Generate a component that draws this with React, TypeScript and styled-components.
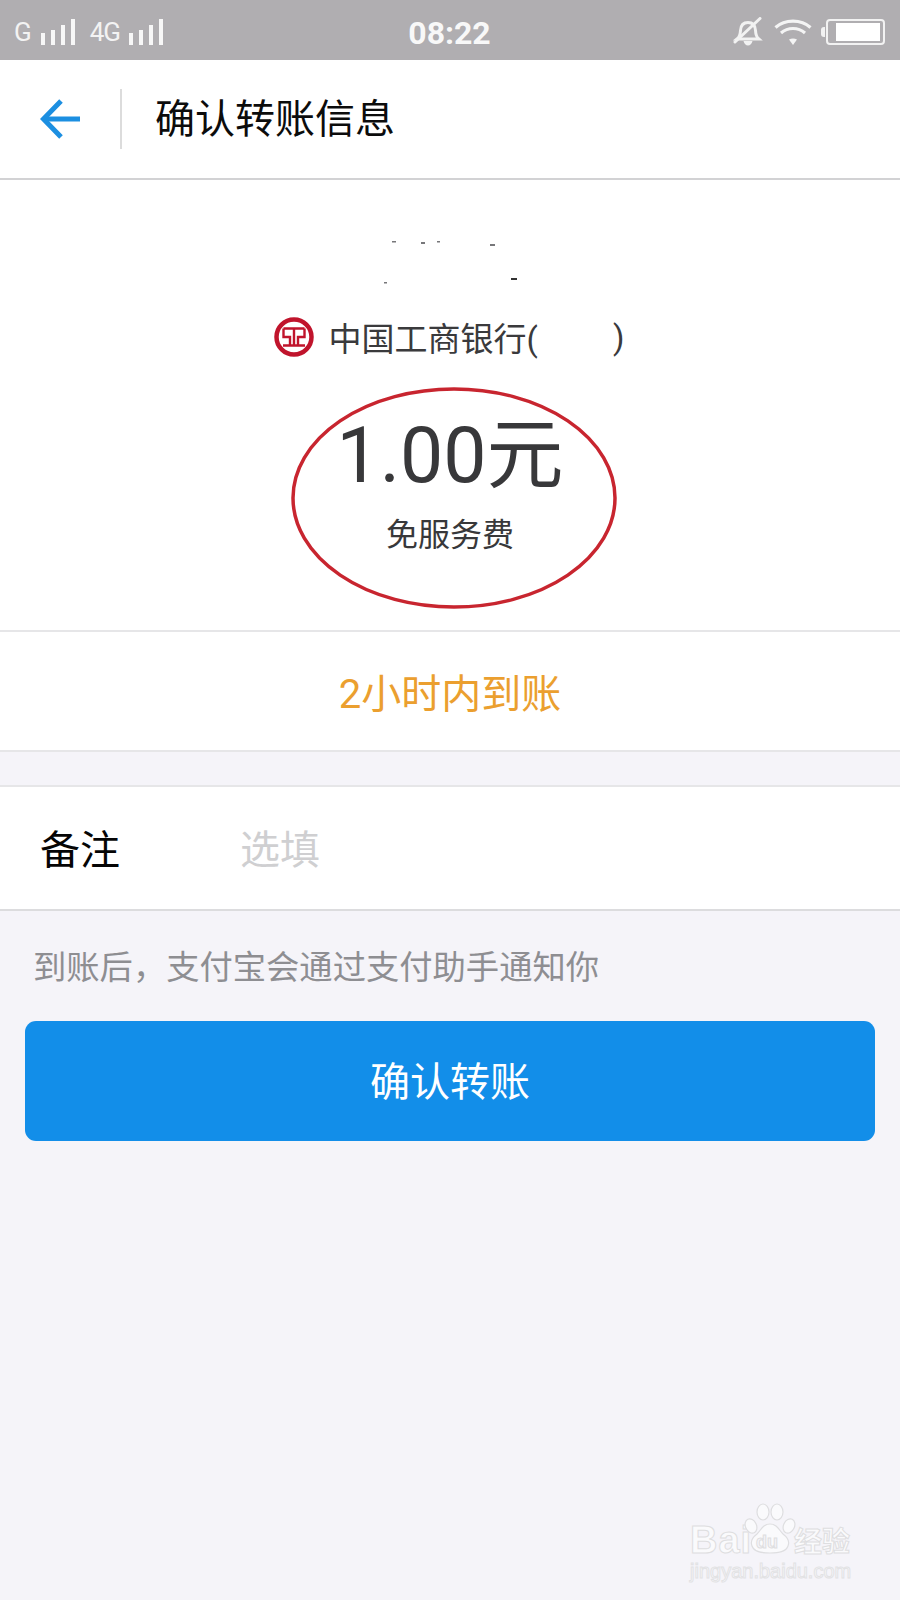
import React from 'react'
import styled, { createGlobalStyle } from 'styled-components'

const GlobalStyle = createGlobalStyle`
  html, body {
    margin: 0;
    padding: 0;
    background: #f5f4f9;
  }
  * {
    box-sizing: border-box;
  }
`

const Page = styled.div`
  position: relative;
  width: 900px;
  height: 1600px;
  overflow: hidden;
  background: #f5f4f9;
  font-family: Roboto, 'Noto Sans CJK SC', sans-serif;
`

const StatusBar = styled.div`
  display: grid;
  grid-template-columns: 1fr auto 1fr;
  align-items: center;
  height: 60px;
  padding: 0 15px 0 14px;
  background: #b0aeb1;
  color: #fff;
`

const StatusLeft = styled.div`
  display: flex;
  align-items: center;
`

const NetworkLabel = styled.span<{ $gap: number }>`
  font-size: 26px;
  line-height: 60px;
  margin-right: ${({ $gap }) => $gap}px;
  letter-spacing: -1px;
  color: #f3f3f3;
`

const Bars = styled.div<{ $gap: number }>`
  display: flex;
  align-items: flex-end;
  gap: 6px;
  height: 26px;
  margin-right: ${({ $gap }) => $gap}px;
`

const Bar = styled.i<{ $h: number }>`
  display: block;
  width: 4px;
  height: ${({ $h }) => $h}px;
  background: #f7f7f7;
`

const Clock = styled.div`
  font-size: 32px;
  font-weight: 700;
  line-height: 60px;
  padding-top: 3px;
  color: #f8f8f8;
`

const StatusRight = styled.div`
  display: flex;
  justify-content: flex-end;
  align-items: center;
  gap: 11px;
`

const Battery = styled.div`
  position: relative;
  width: 59px;
  height: 26px;
  margin-left: 3px;
  border: 2px solid #f2f2f2;
  border-radius: 4px;
  padding: 2px 3px 2px 8px;
  &::before {
    content: '';
    position: absolute;
    left: -7px;
    top: 6px;
    width: 4px;
    height: 10px;
    border-radius: 3px 0 0 3px;
    background: #f2f2f2;
  }
`

const BatteryFill = styled.div`
  width: 100%;
  height: 100%;
  background: #fff;
`

const Header = styled.header`
  display: flex;
  align-items: center;
  height: 120px;
  background: #fff;
  border-bottom: 2px solid #d2d2d4;
`

const BackButton = styled.div`
  display: flex;
  align-items: center;
  justify-content: center;
  width: 122px;
  height: 60px;
  border-right: 2px solid #dcdcdc;
`

const Title = styled.h1`
  margin: 2px 0 0 33px;
  font-size: 40px;
  font-weight: 400;
  line-height: 60px;
  color: #0c0c0c;
`

const Summary = styled.section`
  position: relative;
  display: flex;
  flex-direction: column;
  align-items: center;
  height: 452px;
  padding-top: 136px;
  background: #fff;
  border-bottom: 2px solid #e6e6e8;
`

const Specks = styled.svg`
  position: absolute;
  left: 380px;
  top: 56px;
`

const BankRow = styled.div`
  display: flex;
  align-items: center;
  height: 42px;
  margin-right: 2px;
  font-size: 33px;
  color: #3a3a3c;
`

const BankName = styled.span`
  margin-left: 15px;
`

const MaskedDigits = styled.span`
  display: inline-block;
  width: 75px;
`

const Amount = styled.div`
  margin-top: 48px;
  height: 100px;
  font-size: 77px;
  line-height: 100px;
  color: #38383a;
`

const Fee = styled.div`
  margin-top: 9px;
  font-size: 32px;
  line-height: 40px;
  color: #38383a;
`

const Circle = styled.svg`
  position: absolute;
  left: 290px;
  top: 205px;
`

const ArrivalRow = styled.div`
  display: flex;
  align-items: center;
  justify-content: center;
  height: 120px;
  background: #fff;
  border-bottom: 2px solid #e6e6e8;
  font-size: 40px;
  color: #eb9f2f;
`

const NoteRow = styled.div`
  display: flex;
  align-items: center;
  height: 126px;
  margin-top: 33px;
  padding: 0 0 2px 40px;
  background: #fff;
  border-top: 2px solid #e6e6e8;
  border-bottom: 2px solid #dcdcde;
  font-size: 40px;
`

const NoteLabel = styled.span`
  width: 200px;
  color: #050505;
`

const NotePlaceholder = styled.span`
  color: #cfcfd1;
`

const Hint = styled.p`
  margin: 0;
  padding: 34px 0 0 33px;
  font-size: 33.3px;
  line-height: 46px;
  color: #8e8e92;
`

const ConfirmButton = styled.div`
  display: flex;
  align-items: center;
  justify-content: center;
  height: 120px;
  margin: 30px 25px 0;
  padding-bottom: 4px;
  border-radius: 11px;
  background: #128ee9;
  font-size: 40px;
  color: #fff;
`

const Watermark = styled.div`
  position: absolute;
  left: 690px;
  top: 1503px;
  width: 170px;
  height: 80px;
`

const WatermarkWord = styled.span`
  position: absolute;
  left: 0;
  top: 15px;
  font-family: 'Liberation Sans', sans-serif;
  font-size: 38px;
  font-weight: 700;
  line-height: 44px;
  letter-spacing: 1px;
  color: #fafafc;
  -webkit-text-stroke: 1px #dedee0;
`

const WatermarkDu = styled.span`
  position: absolute;
  left: 66px;
  top: 29px;
  font-family: 'Liberation Sans', sans-serif;
  font-size: 18px;
  font-weight: 700;
  line-height: 20px;
  color: #f5f4f9;
  -webkit-text-stroke: 1px #dedee0;
`

const WatermarkCn = styled.span`
  position: absolute;
  left: 104px;
  top: 19px;
  font-family: 'Noto Sans CJK SC', sans-serif;
  font-size: 28px;
  font-weight: 700;
  line-height: 36px;
  color: #fafafc;
  -webkit-text-stroke: 1px #dedee0;
`

const WatermarkUrl = styled.span`
  position: absolute;
  left: 0;
  top: 56px;
  font-family: 'Liberation Sans', sans-serif;
  font-size: 20px;
  line-height: 24px;
  white-space: nowrap;
  color: #fafafc;
  -webkit-text-stroke: 1px #e2e2e4;
`

const Paw = styled.svg`
  position: absolute;
  left: 54px;
  top: 0;
`

function SignalBars({ gap }: { gap: number }) {
  return (
    <Bars $gap={gap}>
      <Bar $h={12} />
      <Bar $h={15} />
      <Bar $h={20} />
      <Bar $h={26} />
    </Bars>
  )
}

function MutedBell() {
  return (
    <svg width="30" height="29" viewBox="0 0 30 29" fill="none" stroke="#f2f2f2" strokeWidth="3">
      <path d="M4 22c2.500-2 3.300-4.500 3.500-8.500C7.800 8.500 10.500 5.500 15 5.500s7.200 3 7.500 8c.2 4 1 6.500 3.300 8.500z" />
      <path d="M10.500 24h9c-.5 2.500-2.500 4.500-4.500 4.500s-4-2-4.500-4.500z" fill="#f2f2f2" stroke="none" />
      <path d="M2 25 27 1.500" strokeLinecap="round" />
    </svg>
  )
}

function Wifi() {
  return (
    <svg width="38" height="27" viewBox="0 0 38 27" fill="none" stroke="#f4f4f4" strokeWidth="3.200">
      <path d="M1.500 9.500C11 1 27 1 36.500 9.500" />
      <path d="M7 15c7-6 17-6 24 0" />
      <path d="M15 21.500c2.500-1.500 5.500-1.500 8 0L19 27z" fill="#f4f4f4" stroke="none" />
    </svg>
  )
}

function BackArrow() {
  return (
    <svg width="40" height="42" viewBox="0 0 40 42" fill="none" stroke="#1c8fe1" strokeWidth="5">
      <path d="M21 3 3.500 21 21 39" />
      <path d="M4 21h36" />
    </svg>
  )
}

function BankLogo() {
  return (
    <svg width="40" height="40" viewBox="0 0 40 40" fill="none" stroke="#c0142c">
      <circle cx="20" cy="20" r="17.500" strokeWidth="4.500" />
      <path
        d="M9.500 11.500h21M9.500 11.500V20H16v8.500H9M30.500 11.500V20H24v8.500h7M14 28.500h12M20 11.500v17"
        strokeWidth="2.400"
      />
    </svg>
  )
}

export default function App() {
  return (
    <Page>
      <GlobalStyle />
      <StatusBar>
        <StatusLeft>
          <NetworkLabel $gap={10}>G</NetworkLabel>
          <SignalBars gap={15} />
          <NetworkLabel $gap={9}>4G</NetworkLabel>
          <SignalBars gap={0} />
        </StatusLeft>
        <Clock>08:22</Clock>
        <StatusRight>
          <MutedBell />
          <Wifi />
          <Battery>
            <BatteryFill />
          </Battery>
        </StatusRight>
      </StatusBar>
      <Header>
        <BackButton>
          <BackArrow />
        </BackButton>
        <Title>确认转账信息</Title>
      </Header>
      <Summary>
        <Specks width="140" height="50" viewBox="0 0 140 50" fill="#77777a">
          <rect x="12" y="5" width="4" height="1.500" />
          <rect x="41" y="6" width="4" height="2" />
          <rect x="57" y="5" width="3" height="1.500" />
          <rect x="110" y="8" width="5" height="2" />
          <rect x="131" y="42" width="6" height="2" fill="#333" />
          <rect x="4" y="46" width="3" height="1.500" />
        </Specks>
        <BankRow>
          <BankLogo />
          <BankName>中国工商银行(</BankName>
          <MaskedDigits />
          <span>)</span>
        </BankRow>
        <Amount>1.00元</Amount>
        <Fee>免服务费</Fee>
        <Circle width="330" height="226" viewBox="0 0 330 226" fill="none" stroke="#c8252f" strokeWidth="3.500">
          <ellipse cx="164" cy="113" rx="161" ry="109" />
        </Circle>
      </Summary>
      <ArrivalRow>2小时内到账</ArrivalRow>
      <NoteRow>
        <NoteLabel>备注</NoteLabel>
        <NotePlaceholder>选填</NotePlaceholder>
      </NoteRow>
      <Hint>到账后，支付宝会通过支付助手通知你</Hint>
      <ConfirmButton>确认转账</ConfirmButton>
      <Watermark>
        <WatermarkWord>Bai</WatermarkWord>
        <Paw width="56" height="52" viewBox="0 0 56 52" fill="#fafafc" stroke="#dedee0" strokeWidth="1.200">
          <ellipse cx="7" cy="23" rx="5.500" ry="7.500" transform="rotate(-25 7 23)" />
          <ellipse cx="19" cy="9" rx="6" ry="8" />
          <ellipse cx="33" cy="9" rx="6" ry="8" />
          <ellipse cx="45" cy="23" rx="5.500" ry="7.500" transform="rotate(25 45 23)" />
          <path d="M26 21c-7 0-9 6-13 10-4 3-7 7-5 12 2 6 9 7 18 7s16-1 18-7c2-5-1-9-5-12-4-4-6-10-13-10z" />
        </Paw>
        <WatermarkDu>du</WatermarkDu>
        <WatermarkCn>经验</WatermarkCn>
        <WatermarkUrl>jingyan.baidu.com</WatermarkUrl>
      </Watermark>
    </Page>
  )
}
